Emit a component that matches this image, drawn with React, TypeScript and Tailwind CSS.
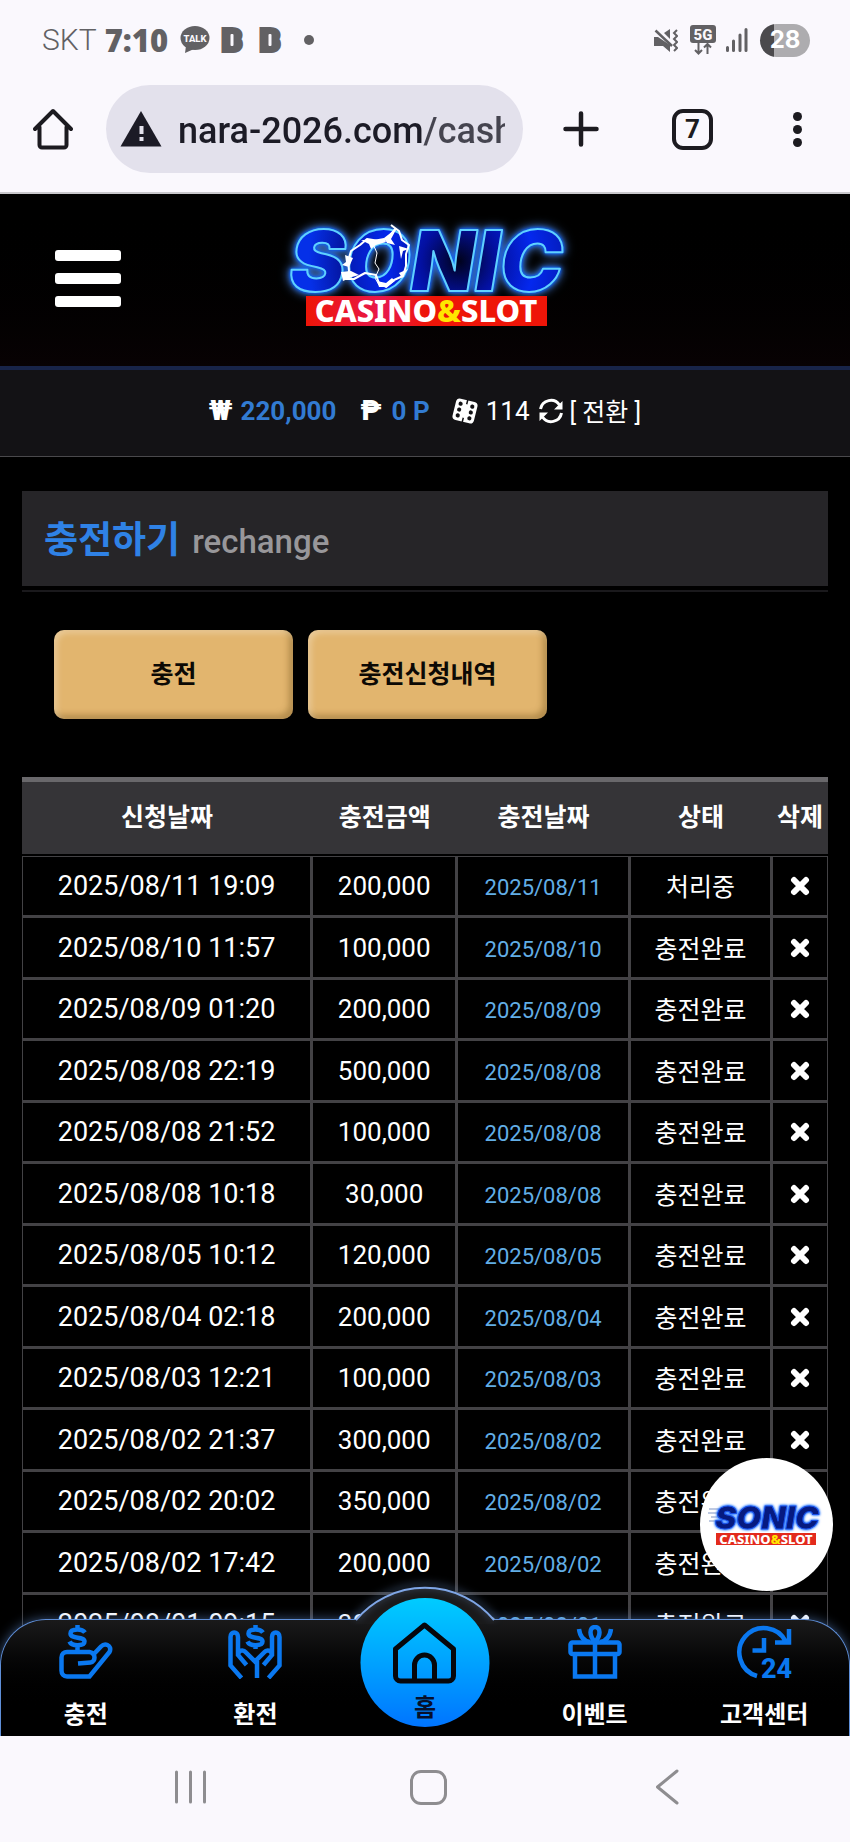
import React from "react";

type Row = { requested: string; amount: string; charged: string; status: string };

const rows: Row[] = [
  { requested: "2025/08/11 19:09", amount: "200,000", charged: "2025/08/11", status: "처리중" },
  { requested: "2025/08/10 11:57", amount: "100,000", charged: "2025/08/10", status: "충전완료" },
  { requested: "2025/08/09 01:20", amount: "200,000", charged: "2025/08/09", status: "충전완료" },
  { requested: "2025/08/08 22:19", amount: "500,000", charged: "2025/08/08", status: "충전완료" },
  { requested: "2025/08/08 21:52", amount: "100,000", charged: "2025/08/08", status: "충전완료" },
  { requested: "2025/08/08 10:18", amount: "30,000", charged: "2025/08/08", status: "충전완료" },
  { requested: "2025/08/05 10:12", amount: "120,000", charged: "2025/08/05", status: "충전완료" },
  { requested: "2025/08/04 02:18", amount: "200,000", charged: "2025/08/04", status: "충전완료" },
  { requested: "2025/08/03 12:21", amount: "100,000", charged: "2025/08/03", status: "충전완료" },
  { requested: "2025/08/02 21:37", amount: "300,000", charged: "2025/08/02", status: "충전완료" },
  { requested: "2025/08/02 20:02", amount: "350,000", charged: "2025/08/02", status: "충전완료" },
  { requested: "2025/08/02 17:42", amount: "200,000", charged: "2025/08/02", status: "충전완료" },
  { requested: "2025/08/01 09:15", amount: "300,000", charged: "2025/08/01", status: "충전완료" },
];

function BlockB() {
  return (
    <svg viewBox="0 0 22 28" className="h-7 w-[22px] overflow-visible" aria-hidden="true">
      <text x="1" y="24" fontSize="28" fontWeight="900" fill="#626164" stroke="#626164" strokeWidth="6" fontFamily="Roboto, sans-serif">B</text>
      <rect x="8.500" y="8" width="3" height="12" rx="1" fill="#faf8fd" />
    </svg>
  );
}

function StatusBar() {
  return (
    <div className="flex h-20 items-center pr-10 pl-[42px] text-[#626164]">
      <span className="font-['Roboto',sans-serif] text-[30px] font-light leading-9">SKT</span>
      <span className="ml-2 font-['Open_Sans',sans-serif] text-[31px] font-extrabold leading-9">7:10</span>
      <svg viewBox="0 0 30 28" className="ml-3 h-7 w-[30px]" aria-hidden="true">
        <ellipse cx="15" cy="12" rx="14.500" ry="12" fill="#626164" />
        <path d="M6 20 5 27l9-4z" fill="#626164" />
        <text x="15" y="15.500" fontSize="9.500" fontWeight="800" textAnchor="middle" fill="#faf8fd" fontFamily="Roboto, sans-serif">TALK</text>
      </svg>
      <span className="ml-3"><BlockB /></span>
      <span className="ml-4"><BlockB /></span>
      <span className="ml-[22px] h-[10px] w-[10px] rounded-full bg-[#626164]" />
      <div className="ml-auto flex items-center">
        <svg viewBox="0 0 24 24" className="h-6 w-6" aria-hidden="true">
          <path d="M0 9h4l12 8v7l-7-6H0z" fill="#626164" />
          <path d="M10 5l6-4v10z" fill="#626164" />
          <path d="M1.500 2.500 18 18" stroke="#626164" strokeWidth="2.500" />
          <path d="M23 2l-3 3 3 3-3 3 3 3-3 3 3 3-3 3" fill="none" stroke="#626164" strokeWidth="2" />
        </svg>
        <svg viewBox="0 0 26 30" className="ml-3 h-[30px] w-[26px]" aria-hidden="true">
          <rect width="26" height="18" rx="3" fill="#626164" />
          <text x="13" y="14.500" fontSize="15" fontWeight="800" textAnchor="middle" fill="#faf8fd" fontFamily="Roboto, sans-serif">5G</text>
          <path d="M8.500 18v10M5 25l3.500 3.500L12 25M17.500 29V19M14 22.500l3.500-3.500 3.500 3.500" fill="none" stroke="#626164" strokeWidth="2" />
        </svg>
        <svg viewBox="0 0 22 24" className="ml-[10px] h-6 w-[22px]" aria-hidden="true">
          <path d="M1.500 19.500v3M7.500 13v9.500M14 7v15.500M20 1.500v21" stroke="#626164" strokeWidth="3" strokeLinecap="round" />
        </svg>
        <span className="ml-3 flex h-[33px] w-[50px] items-center justify-center rounded-full bg-linear-to-r from-[#4b4a4d] from-[28%] to-[#adacaf] to-[28%] font-['Inter',sans-serif] text-[24px] font-bold leading-8 text-white">
          28
        </span>
      </div>
    </div>
  );
}

function BrowserBar() {
  return (
    <div className="flex h-[114px] items-center border-b-2 border-[#c9c8cc] pr-12 pb-[14px] pl-[33px]">
      <button type="button" aria-label="Home">
        <svg viewBox="0 0 40 42" className="h-[42px] w-10" aria-hidden="true">
          <path d="M2 21 20 3l18 18M6.500 19v18a2.500 2.500 0 0 0 2.500 2.500h22a2.500 2.500 0 0 0 2.500-2.500V19" fill="none" stroke="#1c1b20" strokeWidth="4" strokeLinecap="round" strokeLinejoin="round" />
        </svg>
      </button>
      <div className="ml-[33px] flex h-[88px] min-w-0 flex-1 items-center rounded-full bg-[#e3e1ec] pr-[18px] pl-[14px]">
        <svg viewBox="0 0 42 36" className="h-9 w-[42px] shrink-0" aria-hidden="true">
          <path d="M21 0 41.500 35.500H.5z" fill="#1c1b26" />
          <path d="M19.500 15h4v8h-4zM19.500 26h4v4h-4z" fill="#e3e1ec" />
        </svg>
        <input
          aria-label="Address"
          defaultValue="nara-2026.com/cash"
          className="ml-4 min-w-0 flex-1 bg-linear-to-r from-[#1c1b26] from-[246px] to-[#45444f] to-[246px] bg-clip-text pt-1 font-['Roboto',sans-serif] text-[36px] font-medium leading-[44px] text-transparent outline-none"
        />
      </div>
      <button type="button" aria-label="New tab" className="ml-10">
        <svg viewBox="0 0 36 36" className="h-9 w-9" aria-hidden="true">
          <path d="M18 2.500v31M2.500 18h31" stroke="#1c1b20" strokeWidth="4.500" strokeLinecap="round" />
        </svg>
      </button>
      <button type="button" aria-label="Tabs" className="ml-[73px] flex h-[41px] w-[41px] items-center justify-center rounded-[11px] border-4 border-[#1c1b20] font-['Roboto',sans-serif] text-[26px] font-bold leading-8 text-[#1c1b20]">
        7
      </button>
      <button type="button" aria-label="Menu" className="ml-20 flex flex-col gap-1">
        <span className="h-[9px] w-[9px] rounded-full bg-[#1c1b20]" />
        <span className="h-[9px] w-[9px] rounded-full bg-[#1c1b20]" />
        <span className="h-[9px] w-[9px] rounded-full bg-[#1c1b20]" />
      </button>
    </div>
  );
}

function Logo() {
  return (
    <svg viewBox="0 0 320 130" className="h-[130px] w-80 overflow-visible" role="img" aria-label="Sonic Casino & Slot">
      <defs>
        <radialGradient id="core" gradientUnits="userSpaceOnUse" cx="190" cy="50" r="150">
          <stop offset="0" stopColor="#00021c" />
          <stop offset="0.25" stopColor="#0310a0" />
          <stop offset="0.5" stopColor="#0428ee" />
          <stop offset="0.8" stopColor="#0418a8" />
          <stop offset="1" stopColor="#0530e8" />
        </radialGradient>
        <linearGradient id="plate" x1="0" x2="1" y1="0" y2="0">
          <stop offset="0" stopColor="#ee1508" />
          <stop offset="0.32" stopColor="#e8184c" />
          <stop offset="0.5" stopColor="#ee1508" />
        </linearGradient>
      </defs>
      <text
        x="157"
        y="80"
        fontFamily="Inter, sans-serif"
        fontStyle="italic"
        fontWeight="900"
        fontSize="84"
        textAnchor="middle"
        fill="url(#core)"
        stroke="#5fd0ff"
        strokeWidth="2"
        strokeLinejoin="round"
        className="[filter:drop-shadow(0_0_1px_#0b5cf0)_drop-shadow(0_0_2px_#0b5cf0)_drop-shadow(0_0_5px_#4a80d8)]"
      >
        SONIC
      </text>
      <g stroke="#fff" fill="none" strokeLinejoin="round">
        <path d="M127 17l-9 11-8 2-12-2-7 6-9 6-3 10 1 10-3 8 8 0 11-6 11 2 3 8 7 4 8-7 9-4 3-10 0-12 3-9-7-5-3-9-8-6" strokeWidth="2" />
        <path d="M104 33l4 9-2 10 4 6-4 9 4 7" strokeWidth="1" />
      </g>
      <path d="M92 29l12 0 11-2 2 4-10 3-5 4-2-5zM115 27l13-10-6 11 4 6-8-2zM72 61l10-1 8 4-7 2-9 4zM76 44l8 3-4 9-7-2 4-3zM108 70l9 2 6-5 3 3-8 6-8 0zM130 35l10 3-6 2-2 8zM130 62l9-4-6 9z" fill="#fff" />
      <rect x="37" y="85" width="241" height="30" fill="url(#plate)" />
      <text x="157" y="111" fontFamily="'Noto Sans', sans-serif" fontWeight="800" fontSize="31" textAnchor="middle" fill="#fff">
        CASINO<tspan fill="#ffe600">&amp;</tspan>SLOT
      </text>
    </svg>
  );
}

function BadgeLogo() {
  return (
    <svg viewBox="0 0 116 42" className="h-[42px] w-[116px] overflow-visible" role="img" aria-label="Sonic Casino & Slot">
      <path d="M0 5h16M-1 9h14M2 13h12M0 17h12" stroke="#7f95c4" strokeWidth="1" />
      <text
        x="58"
        y="25"
        fontFamily="Inter, sans-serif"
        fontStyle="italic"
        fontWeight="900"
        fontSize="32"
        textAnchor="middle"
        fill="#061a80"
        stroke="#1a50e8"
        strokeWidth="1"
        className="[filter:drop-shadow(0_0_1px_#2f7fff)_drop-shadow(0_0_1px_#2f7fff)]"
      >
        SONIC
      </text>
      <rect x="7" y="29" width="100" height="12" fill="#e32a1c" />
      <text x="57" y="39.500" fontFamily="'Noto Sans', sans-serif" fontWeight="800" fontSize="13" textAnchor="middle" fill="#fff">
        CASINO<tspan fill="#ffe600">&amp;</tspan>SLOT
      </text>
    </svg>
  );
}

function Dice() {
  return (
    <svg viewBox="0 0 26 26" className="h-[26px] w-[26px]" aria-hidden="true">
      <g transform="rotate(14 13 13)">
        <rect x="2" y="2" width="22" height="22" rx="4" fill="#fff" />
        <path d="M13 1v5M13 20v5" stroke="#131215" strokeWidth="1.500" />
        <g fill="#131215">
          <circle cx="7" cy="7" r="2.100" />
          <circle cx="7" cy="13" r="2.100" />
          <circle cx="7" cy="19" r="2.100" />
          <circle cx="19" cy="7" r="2.100" />
          <circle cx="19" cy="13" r="2.100" />
          <circle cx="19" cy="19" r="2.100" />
        </g>
      </g>
    </svg>
  );
}

function Refresh() {
  return (
    <svg viewBox="0 0 26 26" className="h-[26px] w-[26px]" aria-hidden="true">
      <path d="M2.500 11a10.500 10.500 0 0 1 19-4M23.500 15a10.500 10.500 0 0 1-19 4" fill="none" stroke="#fff" strokeWidth="3" />
      <path d="M24.500 3v8.500H16zM1.500 23v-8.500H10z" fill="#fff" />
    </svg>
  );
}

function HandCoin() {
  return (
    <svg viewBox="0 0 54 54" className="h-[54px] w-[54px]" fill="none" stroke="#0a78f0" strokeWidth="4.500" aria-hidden="true">
      <path d="M26 7.500C24.500 5.500 22 4.500 18.500 4.500c-4.500 0-7 1.500-7 4 0 6 14 2.500 14 8 0 2.500-3 3.700-7 3.700s-7-1.400-8-3.700M18.500 0v5M18.500 20v6" />
      <path d="M19 38.500l12.500-1c3-.3 4-3 4-5s-1.500-5-5-5.500H8c-3 0-5.500 2-5.500 5.500v13c0 3.500 2 6 5.500 6h22.500L50.500 27c1.500-3 .5-6-2-7s-5 0-6.500 1.500l-9 9.500" />
    </svg>
  );
}

function HandsCoin() {
  return (
    <svg viewBox="0 0 54 54" className="h-[54px] w-[54px]" fill="none" stroke="#0a78f0" strokeWidth="4.500" aria-hidden="true">
      <path d="M35 7.500C33.500 5.500 31 4.500 27.500 4.500c-4.500 0-7 1.500-7 4 0 6 14 2.500 14 8 0 2.500-3 3.700-7 3.700s-7-1.400-8-3.700M27.500 0v5M27.500 20v4" />
      <path d="M13.500 53 2.500 40.500V12c0-6 7.500-6 7.500 0v18l8.500 10M40.500 53l11-12.500V12c0-6-7.500-6-7.500 0v18l-8.500 10M10 31c0-6 5-7 8-3.500l9 9 9-9c3-3.500 8-2.500 8 3.500M29 36v17" />
    </svg>
  );
}

function Gift() {
  return (
    <svg viewBox="0 0 54 54" className="h-[54px] w-[54px]" fill="none" stroke="#0a78f0" strokeWidth="4.500" aria-hidden="true">
      <rect x="2.500" y="17.500" width="49" height="11.500" rx="2" />
      <path d="M7 29v22.500h40V29M27 17v34M27 17c-6-6-6-15 0-15s6 9 0 15M22 17c-6-1-10-5-11-13M32 17c6-1 10-5 11-13" />
    </svg>
  );
}

function Support24() {
  return (
    <svg viewBox="0 0 54 54" className="h-[54px] w-[54px] overflow-visible" fill="none" stroke="#0a78f0" strokeWidth="4.500" aria-hidden="true">
      <path d="M20 51A24.500 24.500 0 1 1 49 17M52 4v13.500H38M27 13v12.500H15.500" />
      <text x="39.500" y="53" fontSize="27" fontWeight="800" textAnchor="middle" fill="#0a78f0" stroke="none" fontFamily="Roboto, sans-serif">24</text>
    </svg>
  );
}

function TabItem({ label, icon }: { label: string; icon: React.ReactNode }) {
  return (
    <a href="#" className="flex flex-1 flex-col items-center gap-5 pt-[5px]">
      {icon}
      <span className="text-[24px] font-bold leading-8 text-white">{label}</span>
    </a>
  );
}

function TabBar() {
  return (
    <nav className="absolute inset-x-0 bottom-0">
      <div className="relative flex h-[117px] rounded-t-[46px] border border-b-0 border-[#5f8fd8] bg-linear-to-b from-[#1a1a1b] to-black to-80% shadow-[0_0_12px_rgba(110,160,235,0.5)]">
        <svg viewBox="0 0 160 56" className="absolute -top-[34px] left-1/2 h-14 w-40 -translate-x-1/2 overflow-visible" aria-hidden="true">
          <path d="M11 34A90 90 0 0 1 149 34V38H11z" fill="#1a1a1b" />
          <path d="M11 34A90 90 0 0 1 149 34" fill="none" stroke="#7fa6e6" strokeWidth="2" className="drop-shadow-[0_-2px_4px_rgba(130,175,240,0.8)]" />
        </svg>
        <TabItem label="충전" icon={<HandCoin />} />
        <TabItem label="환전" icon={<HandsCoin />} />
        <div className="relative flex-1">
          <a href="#" className="absolute -top-[22px] left-1/2 flex h-[129px] w-[129px] -translate-x-1/2 flex-col items-center rounded-full bg-linear-to-b from-[#00ccff] to-[#0074ff] pt-6">
            <svg viewBox="0 0 64 62" className="h-[62px] w-16 shrink-0" fill="none" stroke="#06070c" strokeWidth="5" strokeLinejoin="round" aria-hidden="true">
              <path d="M3 27 32 3l29 24v27a5 5 0 0 1-5 5H8a5 5 0 0 1-5-5z" />
              <path d="M22 59V43a10 10 0 0 1 20 0v16" />
            </svg>
            <span className="mt-2 text-[24px] font-bold leading-8 text-[#06102c]">홈</span>
          </a>
        </div>
        <TabItem label="이벤트" icon={<Gift />} />
        <TabItem label="고객센터" icon={<Support24 />} />
      </div>
    </nav>
  );
}

const headCell = "border-t-[5px] border-b-2 border-t-[#69686b] border-b-black bg-[#353437] p-0 font-bold whitespace-nowrap";
const cell = "border border-r-2 border-b-2 border-[#434245] p-0 text-center last:border-r";

function HistoryTable() {
  return (
    <table className="w-full table-fixed border-separate border-spacing-0 text-white">
      <thead>
        <tr className="h-[79px] text-[25px] leading-8">
          <th className={`${headCell} w-[36%]`}>신청날짜</th>
          <th className={`${headCell} w-[18%]`}>충전금액</th>
          <th className={headCell}>충전날짜</th>
          <th className={`${headCell} w-[142px]`}>상태</th>
          <th className={`${headCell} w-[56px]`}>삭제</th>
        </tr>
      </thead>
      <tbody>
        {rows.map((row) => (
          <tr key={row.requested} className="odd:h-[61px] even:h-[62px]">
            <td className={`${cell} text-[27px] leading-8`}>{row.requested}</td>
            <td className={`${cell} text-[26px] leading-8`}>{row.amount}</td>
            <td className={`${cell} pt-1 text-[22px] leading-8 text-[#62aee6]`}>{row.charged}</td>
            <td className={`${cell} pt-1 text-[25px] leading-8`}>{row.status}</td>
            <td className={cell}>
              <button type="button" aria-label={`${row.requested} 삭제`} className="flex h-8 w-full items-center justify-center">
                <svg viewBox="0 0 20 20" className="h-5 w-5" aria-hidden="true">
                  <path d="M4 4l12 12M16 4 4 16" stroke="#fff" strokeWidth="6" strokeLinecap="round" />
                </svg>
              </button>
            </td>
          </tr>
        ))}
      </tbody>
    </table>
  );
}

const goldButton =
  "h-[89px] w-[239px] rounded-[10px] bg-[#e2b56e] text-[25px] font-bold leading-8 text-[#0c0905] shadow-[inset_3px_3px_6px_rgba(255,255,255,0.3),inset_-4px_-4px_6px_rgba(90,60,10,0.35)]";

export default function App() {
  return (
    <div className="flex h-screen flex-col bg-[#faf8fd] font-['Roboto','Noto_Sans_CJK_KR',sans-serif]">
      <StatusBar />
      <BrowserBar />

      <div className="relative min-h-0 flex-1 overflow-hidden bg-black">
        <div className="h-full overflow-y-auto [scrollbar-width:none]">
          <header className="relative flex h-44 items-center justify-center border-b-4 border-[#182448] bg-linear-to-b from-black to-[#080203] pb-1">
            <button type="button" aria-label="메뉴" className="absolute left-[55px] flex w-[66px] flex-col gap-3">
              <span className="h-[11px] rounded-[3px] bg-white" />
              <span className="h-[11px] rounded-[3px] bg-white" />
              <span className="h-[11px] rounded-[3px] bg-white" />
            </button>
            <a href="#" className="ml-2 pb-1">
              <Logo />
            </a>
          </header>

          <div className="flex h-[87px] items-center justify-center border-b border-[#4a494c] bg-[#131215] pb-1 text-[26px] leading-8 text-white">
            <span className="text-[28px] font-black">₩</span>
            <span className="ml-2 font-bold text-[#327bd2]">220,000</span>
            <span className="ml-6 text-[28px] font-black">₱</span>
            <span className="ml-[10px] font-bold text-[#327bd2]">0 P</span>
            <span className="ml-[22px]"><Dice /></span>
            <span className="ml-2">114</span>
            <span className="ml-2"><Refresh /></span>
            <button type="button" className="ml-[6px] pt-1 text-[25px] leading-8">[ 전환 ]</button>
          </div>

          <main className="px-[22px] pt-[34px]">
            <h1 className="flex h-[95px] items-baseline gap-3 bg-[#262528] px-[22px] pt-6 font-medium">
              <span className="text-[37px] font-bold leading-[52px] text-[#2f82e6]">충전하기</span>
              <span className="text-[33px] leading-[52px] text-[#98979a]">rechange</span>
            </h1>
            <hr className="mt-1 border-t-2 border-[#1a191c]" />

            <div className="mt-[38px] mb-[58px] flex gap-[15px] px-8">
              <button type="button" className={goldButton}>충전</button>
              <button type="button" className={goldButton}>충전신청내역</button>
            </div>

            <HistoryTable />
          </main>
        </div>

        <a href="#" className="absolute right-[17px] bottom-[145px] flex h-[133px] w-[133px] items-center justify-center rounded-full bg-white">
          <BadgeLogo />
        </a>
        <TabBar />
      </div>

      <div className="flex h-[106px] items-center justify-between pr-[171px] pb-1 pl-[174px]">
        <button type="button" aria-label="Recent apps">
          <svg viewBox="0 0 34 34" className="h-[34px] w-[34px]" aria-hidden="true">
            <path d="M2.500 2v30M16.500 2v30M30.500 2v30" stroke="#8e8d90" strokeWidth="3" strokeLinecap="round" />
          </svg>
        </button>
        <button type="button" aria-label="Home screen" className="h-[35px] w-[37px] rounded-[11px] border-[3px] border-[#8e8d90]" />
        <button type="button" aria-label="Back">
          <svg viewBox="-6 0 30 36" className="h-9 w-[30px]" aria-hidden="true">
            <path d="M22 2 2.500 18 22 34" fill="none" stroke="#8e8d90" strokeWidth="3" strokeLinecap="round" strokeLinejoin="round" />
          </svg>
        </button>
      </div>
    </div>
  );
}
